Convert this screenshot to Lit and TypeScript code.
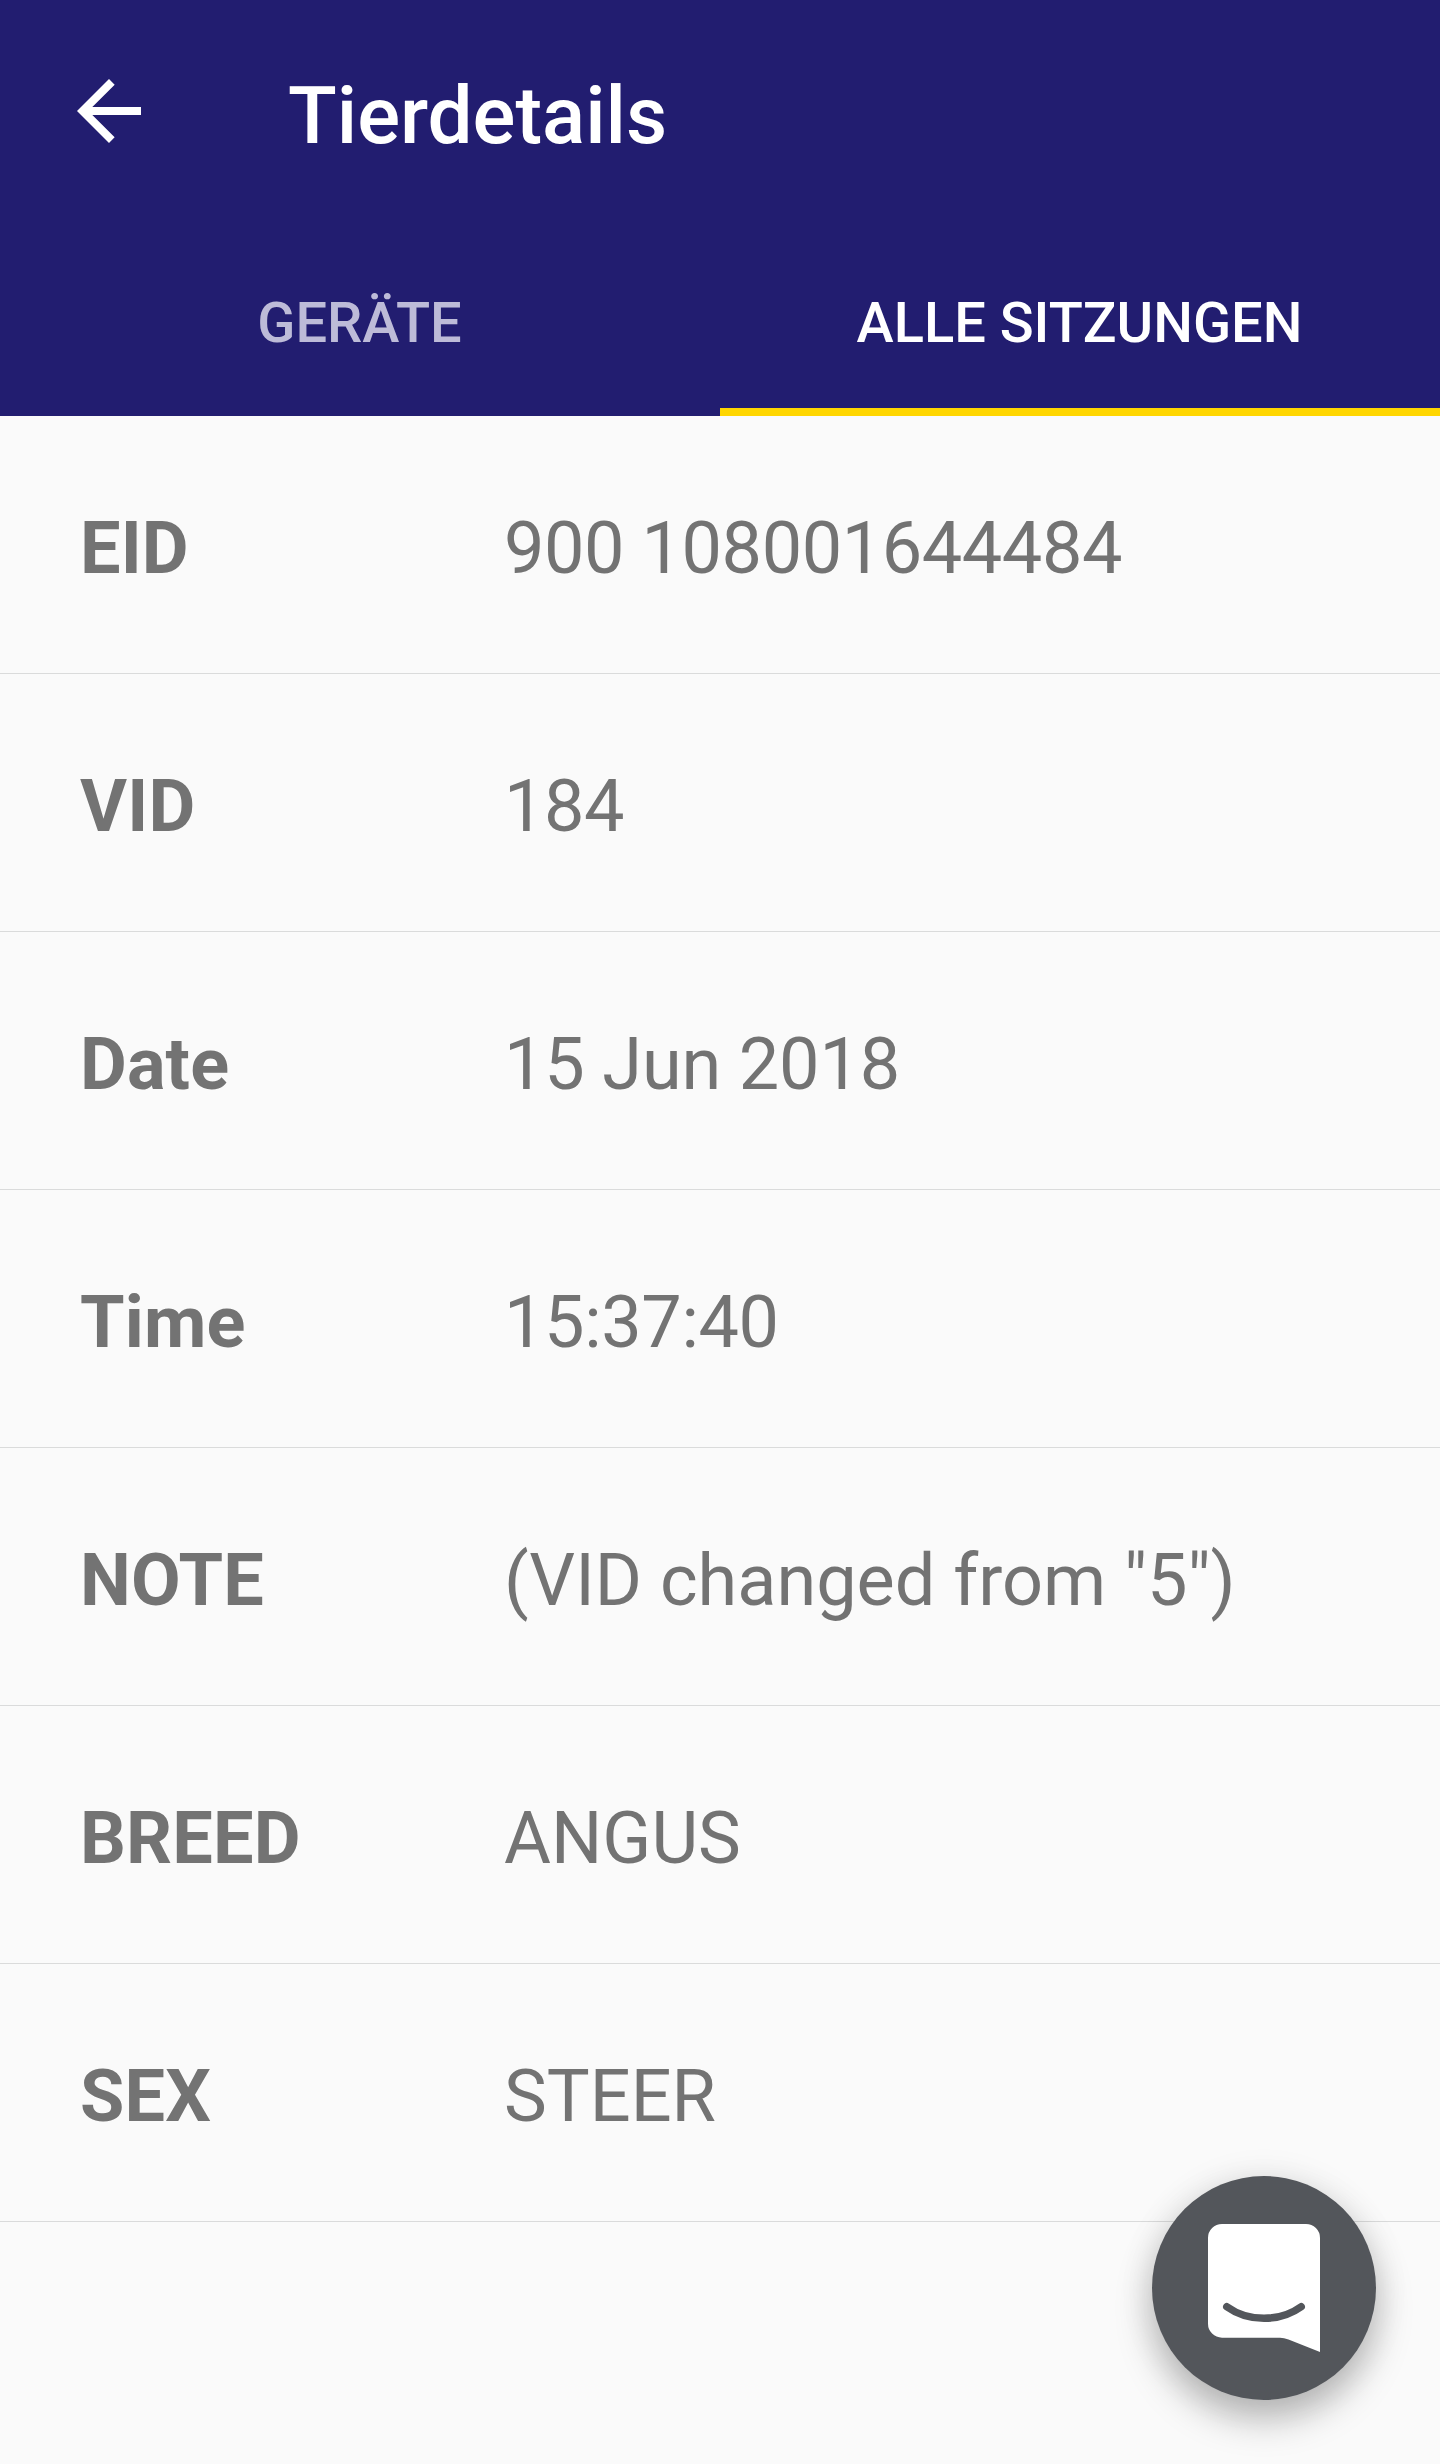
import { LitElement, html, css } from "lit";
import { customElement } from "lit/decorators.js";

type Spacing = "digits" | "clock" | "mixed" | "plain";

const fields: [string, string, Spacing][] = [
  ["EID", "900 108001644484", "digits"],
  ["VID", "184", "digits"],
  ["Date", "15 Jun 2018", "mixed"],
  ["Time", "15:37:40", "clock"],
  ["NOTE", '(VID changed from "5")', "plain"],
  ["BREED", "ANGUS", "plain"],
  ["SEX", "STEER", "plain"],
];

@customElement("app-root")
export class AppRoot extends LitElement {
  static styles = css`
    :host { display: block; position: relative; height: 2464px; overflow: hidden; background: #fafafa; font-family: Roboto, sans-serif; color: #737373; }
    header { background: #221d70; color: #fff; height: 416px; display: flex; flex-direction: column; }
    .bar { height: 224px; display: flex; align-items: center; }
    .back { width: 96px; height: 96px; margin: 0 0 2px 61px; flex: none; }
    h1 { margin: 8px 0 0 131px; font-size: 80px; font-weight: 500; line-height: 96px; white-space: nowrap; }
    .tabs { flex: 1; display: grid; grid-template-columns: 1fr 1fr; }
    .tab { box-sizing: border-box; padding: 14px 1px 0 0; display: flex; align-items: center; justify-content: center; font-size: 56px; font-weight: 500; color: #bdbbd8; border-bottom: 8px solid transparent; white-space: nowrap; }
    .tab.active { color: #fff; border-bottom-color: #ffd600; }
    .row { box-sizing: border-box; height: 258px; padding: 8px 0 0 80px; display: grid; grid-template-columns: 424px 1fr; align-items: center; font-size: 72px; border-bottom: 1px solid #dadbdb; white-space: nowrap; }
    .label { font-weight: 700; letter-spacing: 0.15px; }
    .digits { letter-spacing: -0.43px; }
    .clock { letter-spacing: -0.38px; }
    .mixed { letter-spacing: -0.15px; }
    .chat { position: absolute; left: 1152px; top: 2176px; width: 224px; height: 224px; border-radius: 50%; background: #53565b; box-shadow: 0 20px 36px rgba(0,0,0,.25), 0 2px 36px rgba(0,0,0,.09); }
    svg { display: block; }
  `;
  render() {
    return html`
      <header>
        <div class="bar">
          <svg class="back" viewBox="0 0 24 24" fill="#fff"><path d="M20 11H7.83l5.59-5.59L12 4l-8 8 8 8 1.41-1.41L7.83 13H20z"/></svg>
          <h1>Tierdetails</h1>
        </div>
        <nav class="tabs"><div class="tab">GERÄTE</div><div class="tab active">ALLE SITZUNGEN</div></nav>
      </header>
      <main>${fields.map(([k, v, s]) => html`<div class="row"><span class="label">${k}</span><span class=${s}>${v}</span></div>`)}</main>
      <div class="chat">
        <svg width="224" height="224" viewBox="0 0 224 224"><path d="M70 48H154A14 14 0 0 1 168 62V176L136.500 163.500Q132 161.700 128 161.700H70A14 14 0 0 1 56 147.700V62A14 14 0 0 1 70 48Z" fill="#fff"/><path d="M74.800 130.700Q91 142.300 112 142.300T149.200 130.700" fill="none" stroke="#53565b" stroke-width="7.500" stroke-linecap="round"/></svg>
      </div>
    `;
  }
}
